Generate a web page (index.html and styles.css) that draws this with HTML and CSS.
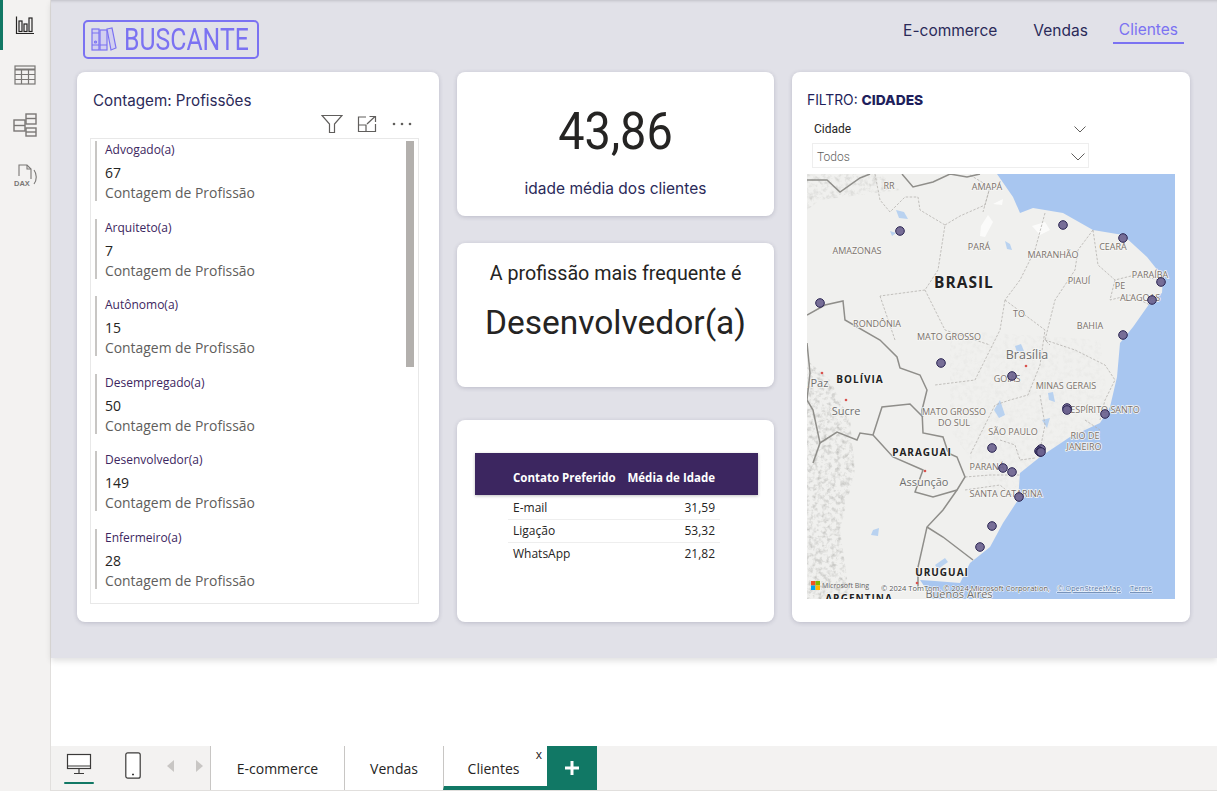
FILE: index.html
```html
<!DOCTYPE html>
<html lang="pt-BR">
<head>
    <meta charset="UTF-8">
    <title>Buscante - Clientes</title>
    <link rel="stylesheet" href="styles.css">
</head>
<body>
<div class="app">
    <!-- Power BI side rail -->
    <aside class="rail">
        <div class="rail-item active">
            <svg width="20" height="20" viewBox="0 0 20 20" fill="none" stroke="#252423" stroke-width="1.2">
                <path d="M1.5 1.5V18.5H19"/>
                <rect x="4" y="6" width="3" height="10.5"/>
                <rect x="9" y="9" width="3" height="7.5"/>
                <rect x="14" y="3" width="3" height="13.5"/>
            </svg>
        </div>
        <div class="rail-item">
            <svg width="22" height="20" viewBox="0 0 22 20" fill="none" stroke="#797775" stroke-width="1.2">
                <rect x="1" y="1" width="20" height="18"/>
                <path d="M1 4.5H21" stroke-width="2"/>
                <path d="M1 9.5H21M1 14.5H21M7.5 4.5V19M14.5 4.5V19"/>
            </svg>
        </div>
        <div class="rail-item">
            <svg width="24" height="24" viewBox="0 0 24 24" fill="none" stroke="#797775" stroke-width="1.4">
                <rect x="1" y="7" width="11" height="11"/>
                <path d="M1 12.500H12"/>
                <rect x="13" y="1" width="10" height="10"/>
                <path d="M13 5.500H23"/>
                <rect x="13" y="15" width="10" height="8"/>
                <path d="M13 19H23"/>
            </svg>
        </div>
        <div class="rail-item">
            <svg width="24" height="24" viewBox="0 0 24 24" fill="none" stroke="#797775" stroke-width="1.1">
                <path d="M6 13V2H14L18 6V16"/>
                <path d="M14 2V6H18"/>
                <path d="M21 7C24 11 24 17 21 21"/>
            </svg>
            <span class="dax">DAX</span>
        </div>
    </aside>

    <div class="main">
        <section class="report">
            <header class="report-top">
                <div class="logo">
                    <svg class="logo-books" width="26" height="25" viewBox="0 0 26 25" fill="none" stroke="#7b72f2" stroke-width="1.2">
                        <rect x="1" y="2" width="7" height="21" fill="#d2cff0"/>
                        <path d="M1 6H8M1 18H8"/>
                        <circle cx="4.500" cy="15" r="1"/>
                        <rect x="9" y="3" width="7" height="20" fill="#d2cff0"/>
                        <path d="M9 18H16"/>
                        <path d="M16 2L21 1L25 21L20 23Z" fill="#d2cff0"/>
                    </svg>
                    <span class="logo-text">BUSCANTE</span>
                </div>
                <nav class="nav">
                    <a>E-commerce</a>
                    <a>Vendas</a>
                    <a class="current">Clientes</a>
                </nav>
            </header>

            <div class="cards">
                <!-- Card list of professions -->
                <div class="card card-list">
                    <h3 class="card-title">Contagem: Profissões</h3>
                    <div class="visual-header">
                        <span class="visual-btn">
                            <svg width="22" height="20" viewBox="0 0 22 20" fill="none" stroke="#605e5c" stroke-width="1.200">
                                <path d="M1 1.500H21L13.500 10V18.500H8.500V10Z"/>
                            </svg>
                        </span>
                        <span class="visual-btn">
                            <svg width="20" height="18" viewBox="0 0 20 18" fill="none" stroke="#605e5c" stroke-width="1.200">
                                <path d="M9 2H1.500V16.500H18.500V9"/>
                                <path d="M1.500 10H9V16.500"/>
                                <path d="M10 9L18 1.500M12.500 1.500H18.500V7"/>
                            </svg>
                        </span>
                        <span class="visual-btn">
                            <svg width="20" height="4" viewBox="0 0 20 4" fill="#605e5c">
                                <circle cx="2" cy="2" r="1.300"/><circle cx="10" cy="2" r="1.300"/><circle cx="18" cy="2" r="1.300"/>
                            </svg>
                        </span>
                    </div>
                    <div class="list-box">
                        <div class="scroll-thumb"></div>
                        <div class="list-item">
                            <div class="item-name">Advogado(a)</div>
                            <div class="item-value">67</div>
                            <div class="item-label">Contagem de Profissão</div>
                        </div>
                        <div class="list-item">
                            <div class="item-name">Arquiteto(a)</div>
                            <div class="item-value">7</div>
                            <div class="item-label">Contagem de Profissão</div>
                        </div>
                        <div class="list-item">
                            <div class="item-name">Autônomo(a)</div>
                            <div class="item-value">15</div>
                            <div class="item-label">Contagem de Profissão</div>
                        </div>
                        <div class="list-item">
                            <div class="item-name">Desempregado(a)</div>
                            <div class="item-value">50</div>
                            <div class="item-label">Contagem de Profissão</div>
                        </div>
                        <div class="list-item">
                            <div class="item-name">Desenvolvedor(a)</div>
                            <div class="item-value">149</div>
                            <div class="item-label">Contagem de Profissão</div>
                        </div>
                        <div class="list-item">
                            <div class="item-name">Enfermeiro(a)</div>
                            <div class="item-value">28</div>
                            <div class="item-label">Contagem de Profissão</div>
                        </div>
                    </div>
                </div>

                <div class="middle">
                    <div class="card card-age">
                        <div class="big-number">43,86</div>
                        <div class="big-caption">idade média dos clientes</div>
                    </div>
                    <div class="card card-job">
                        <div class="job-inner">
                            <div class="job-caption">A profissão mais frequente é</div>
                            <div class="job-name">Desenvolvedor(a)</div>
                        </div>
                    </div>
                    <div class="card card-table">
                        <div class="table-head">
                            <span class="col-a">Contato Preferido</span>
                            <span class="col-b">Média de Idade</span>
                        </div>
                        <div class="table-body">
                            <div class="table-row"><span>E-mail</span><span>31,59</span></div>
                            <div class="table-row"><span>Ligação</span><span>53,32</span></div>
                            <div class="table-row"><span>WhatsApp</span><span>21,82</span></div>
                        </div>
                    </div>
                </div>

                <div class="card card-map">
                    <h3 class="filter-title">FILTRO: <b>CIDADES</b></h3>
                    <div class="slicer">
                        <div class="slicer-head">
                            <span>Cidade</span>
                            <svg width="12" height="7" viewBox="0 0 12 7" fill="none" stroke="#605e5c"><path d="M.5 .5L6 6L11.500 .5"/></svg>
                        </div>
                        <div class="slicer-box">
                            <span>Todos</span>
                            <svg width="14" height="8" viewBox="0 0 14 8" fill="none" stroke="#605e5c"><path d="M.5 .5L7 7L13.500 .5"/></svg>
                        </div>
                    </div>
                    <!-- viewBox uses page coordinates so pins are easy to place -->
                    <svg class="map" width="368" height="425" viewBox="807 174 368 425">
                        <defs>
                            <filter id="relief" x="0" y="0" width="100%" height="100%">
                                <feTurbulence type="fractalNoise" baseFrequency="0.22" numOctaves="3" seed="4"/>
                                <feColorMatrix type="matrix" values="0 0 0 0 0.45  0 0 0 0 0.45  0 0 0 0 0.43  0 0 0 1.600 -0.700"/>
                                <feComposite in2="SourceGraphic" operator="in"/>
                            </filter>
                        </defs>
                        <rect x="807" y="174" width="368" height="425" fill="#f0f0ee"/>
                        <!-- rough relief on the andes and the highlands -->
                        <path filter="url(#relief)" d="M807 360L830 380L850 420L855 470L840 530L850 599H807Z"/>
                        <path filter="url(#relief)" opacity=".6" d="M807 174H880L900 190L860 195L820 200L807 210Z"/>
                        <path filter="url(#relief)" opacity=".15" d="M950 330L1100 340L1110 420L1000 500L950 430Z"/>
                        <!-- sea -->
                        <path fill="#a8c6f0" d="M997 174L1013 197L1020 213L1033 208L1063 213L1093 230L1123 235L1147 257L1163 277L1162 293L1152 300L1133 327L1120 343L1117 377L1110 407L1100 423L1070 437L1040 457L1020 473L1018 500L1003 523L990 547L970 563L960 583L935 581L920 580L933 599H1175V174Z"/>
                        <!-- lakes and rivers -->
                        <g fill="#b9d2f0">
                            <path d="M896 210L904 212L908 219L899 218Z"/>
                            <path d="M890 231L896 233L892 236Z"/>
                            <path d="M1005 241L1010 244L1012 250L1007 249Z"/>
                            <path d="M873 530L879 528L878 536L871 535Z"/>
                            <path d="M1048 393L1053 392L1055 402L1049 400Z"/>
                            <path d="M1000 400L1005 415L999 418L994 410Z"/>
                            <path d="M1042 420L1050 418L1047 428Z"/>
                            <path d="M935 565L945 558L948 562L938 569Z"/>
                            <path d="M1015 346L1021 344L1024 351L1017 352Z"/>
                        </g>
                        <g fill="#fbfbfa">
                            <path d="M981 226L988 215L993 222L985 237L980 236Z"/>
                            <path d="M1032 226L1045 222L1050 230L1040 235Z"/>
                            <path d="M993 204L1003 199L1002 205Z"/>
                        </g>
                        <!-- state lines -->
                        <g fill="none" stroke="#b5b3ae" stroke-width=".8" stroke-dasharray="2.500 1.500">
                            <path d="M875 174L880 200L890 212L905 197H918L920 210L945 225L938 270L925 290L880 296"/>
                            <path d="M945 225L960 216L985 205L990 187L970 175"/>
                            <path d="M990 187L983 212"/>
                            <path d="M1045 213L1035 250L1020 280L1005 300"/>
                            <path d="M1093 230L1078 250L1075 270L1055 300L1045 340L1050 345"/>
                            <path d="M1093 230L1098 265L1115 280L1135 275L1160 280"/>
                            <path d="M1115 280L1110 300L1130 295L1150 305"/>
                            <path d="M1005 300L1000 330L985 360L975 380L935 385"/>
                            <path d="M1005 300L1045 330L1040 365L1028 395L1010 400L995 405"/>
                            <path d="M1045 340L1075 350L1105 365L1115 380L1105 400L1100 420"/>
                            <path d="M995 405L970 455"/>
                            <path d="M1040 395L1045 425L1040 450"/>
                            <path d="M1000 440L1015 445L1020 460L1035 458"/>
                            <path d="M965 477L990 475L1020 475"/>
                            <path d="M965 490L1000 485L1018 500"/>
                            <path d="M1085 420L1100 430"/>
                            <path d="M880 296L895 340"/>
                            <path d="M925 290L945 330L990 345"/>
                        </g>
                        <!-- country lines -->
                        <g fill="none" stroke="#8f8e8a" stroke-width="1.500">
                            <path d="M807 180L827 180L840 192L860 178L870 174"/>
                            <path d="M902 174L913 187L933 182L950 174L967 177L980 174"/>
                            <path d="M807 315L825 305L843 301L845 320L880 340L897 357L900 368L920 375L927 390L922 410L923 433L943 437L948 452"/>
                            <path d="M873 435L882 407L910 404L923 417"/>
                            <path d="M873 435L893 457L923 470L915 492L933 497L957 490L965 477L957 457L948 453"/>
                            <path d="M957 490L943 510L927 527L918 567L918 590"/>
                            <path d="M927 527L943 537L973 560"/>
                            <path d="M807 343L810 373L807 400L813 410L820 443L837 432L857 440L860 433L873 435"/>
                            <path d="M820 443L813 463"/>
                        </g>
                        <!-- city dots -->
                        <g fill="#d9534f">
                            <circle cx="1026" cy="366" r="1.300"/>
                            <circle cx="846" cy="400" r="1.300"/>
                            <circle cx="925" cy="471" r="1.300"/>
                            <circle cx="822" cy="373" r="1.300"/>
                            <circle cx="917" cy="583" r="1.300"/>
                        </g>
                        <!-- labels -->
                        <g class="map-labels">
                            <text x="889" y="189">RR</text>
                            <text x="987" y="190">AMAPÁ</text>
                            <text x="857" y="254">AMAZONAS</text>
                            <text x="979" y="250">PARÁ</text>
                            <text x="1053" y="258">MARANHÃO</text>
                            <text x="1113" y="250">CEARÁ</text>
                            <text x="1079" y="284">PIAUÍ</text>
                            <text x="1150" y="278">PARAÍBA</text>
                            <text x="1120" y="289">PE</text>
                            <text x="1140" y="301">ALAGOAS</text>
                            <text x="1019" y="317">TO</text>
                            <text x="1090" y="329">BAHIA</text>
                            <text x="877" y="327">RONDÔNIA</text>
                            <text x="949" y="340">MATO GROSSO</text>
                            <text x="1007" y="382">GOIÁS</text>
                            <text x="1066" y="389">MINAS GERAIS</text>
                            <text x="954" y="415">MATO GROSSO</text>
                            <text x="954" y="426">DO SUL</text>
                            <text x="1105" y="413">ESPÍRITO SANTO</text>
                            <text x="1013" y="435">SÃO PAULO</text>
                            <text x="1085" y="439">RIO DE</text>
                            <text x="1084" y="450">JANEIRO</text>
                            <text x="987" y="470">PARANÁ</text>
                            <text x="1006" y="497">SANTA CATARINA</text>
                        </g>
                        <g class="map-cities">
                            <text x="1027" y="359">Brasília</text>
                            <text x="812" y="387">La Paz</text>
                            <text x="846" y="415">Sucre</text>
                            <text x="924" y="486">Assunção</text>
                            <text x="959" y="598">Buenos Aires</text>
                        </g>
                        <g class="map-countries">
                            <text x="964" y="288">BRASIL</text>
                            <text x="860" y="383">BOLÍVIA</text>
                            <text x="922" y="456">PARAGUAI</text>
                            <text x="942" y="576">URUGUAI</text>
                            <text x="859" y="602">ARGENTINA</text>
                        </g>
                        <!-- pins -->
                        <g fill="#6c638f" fill-opacity=".92" stroke="#2b2552">
                            <circle cx="900" cy="231" r="4.300"/>
                            <circle cx="1063" cy="225" r="4.300"/>
                            <circle cx="1123" cy="238" r="4.300"/>
                            <circle cx="1161" cy="282" r="4.300"/>
                            <circle cx="1152" cy="300" r="4.300"/>
                            <circle cx="820" cy="303" r="4.300"/>
                            <circle cx="1123" cy="335" r="4.300"/>
                            <circle cx="941" cy="363" r="4.300"/>
                            <circle cx="1012" cy="376" r="4.300"/>
                            <circle cx="1067" cy="408" r="4.300"/>
                            <circle cx="1067" cy="410" r="4.300"/>
                            <circle cx="1105" cy="414" r="4.300"/>
                            <circle cx="1041" cy="449" r="4.300"/>
                            <circle cx="1039" cy="451" r="4.300"/>
                            <circle cx="1040" cy="452" r="4.300"/>
                            <circle cx="1041" cy="452" r="4.300"/>
                            <circle cx="992" cy="448" r="4.300"/>
                            <circle cx="1003" cy="468" r="4.300"/>
                            <circle cx="1012" cy="472" r="4.300"/>
                            <circle cx="1019" cy="497" r="4.300"/>
                            <circle cx="992" cy="526" r="4.300"/>
                            <circle cx="980" cy="547" r="4.300"/>
                        </g>
                        <!-- bing mark and credits -->
                        <rect x="811" y="581" width="4.500" height="4.500" fill="#f25022"/>
                        <rect x="815.500" y="581" width="4.500" height="4.500" fill="#7fba00"/>
                        <rect x="811" y="585.500" width="4.500" height="4.500" fill="#00a4ef"/>
                        <rect x="815.500" y="585.500" width="4.500" height="4.500" fill="#ffb900"/>
                        <text class="map-bing" x="822" y="588">Microsoft Bing</text>
                        <text class="map-credit" x="881" y="591">© 2024 TomTom, © 2024 Microsoft Corporation,</text>
                        <text class="map-credit link" x="1057" y="591">© OpenStreetMap</text>
                        <text class="map-credit link" x="1130" y="591">Terms</text>
                    </svg>
                </div>
            </div>
        </section>

        <div class="blank"></div>

        <!-- page tabs -->
        <footer class="tabbar">
            <div class="view-btn selected">
                <svg width="26" height="22" viewBox="0 0 26 22" fill="none" stroke="#3b3a39" stroke-width="1.200">
                    <rect x="1.500" y="1.500" width="23" height="14" fill="#fff"/>
                    <path d="M1.500 13H24.500M13 15.500V20M8 20.500H18"/>
                </svg>
            </div>
            <div class="view-btn">
                <svg width="16" height="27" viewBox="0 0 16 27" fill="none" stroke="#3b3a39" stroke-width="1.200">
                    <rect x=".8" y=".8" width="14.400" height="25.400" rx="2" fill="#fff"/>
                    <path d="M7 22.500H9" stroke-width="1.500"/>
                </svg>
            </div>
            <div class="pager">
                <svg width="8" height="12" viewBox="0 0 8 12" fill="#c8c6c4"><path d="M7 0V12L0 6Z"/></svg>
                <svg width="8" height="12" viewBox="0 0 8 12" fill="#c8c6c4"><path d="M1 0V12L8 6Z"/></svg>
            </div>
            <div class="tab tab-ecom">E-commerce</div>
            <div class="tab tab-vendas">Vendas</div>
            <div class="tab tab-clientes"><span>Clientes</span><i class="tab-close">x</i></div>
            <div class="tab-add">
                <svg width="14" height="14" viewBox="0 0 14 14" fill="#fff"><path d="M5.500 0H8.500V5.500H14V8.500H8.500V14H5.500V8.500H0V5.500H5.500Z"/></svg>
            </div>
        </footer>
    </div>
</div>
</body>
</html>
```

FILE: styles.css
```css
html, body {
    margin: 0;
    height: 100%;
    background: #fff;
    font-family: "Open Sans", sans-serif;
    overflow: hidden;
}

.app {
    display: flex;
    width: 1217px;
    height: 791px;
}

/* Side rail */
.rail {
    width: 50px;
    flex: none;
    background: #f3f2f1;
    border-right: 1px solid #e1dfdd;
    display: flex;
    flex-direction: column;
}

.rail-item {
    height: 50px;
    display: flex;
    align-items: center;
    justify-content: center;
    position: relative;
}

.rail-item.active {
    box-shadow: inset 3px 0 0 #117865;
}

.dax {
    position: absolute;
    left: 13px;
    top: 29px;
    font: bold 7.500px "Liberation Sans", sans-serif;
    color: #797775;
    background: #f3f2f1;
    padding: 0 1px;
}

.main {
    flex: 1;
    display: flex;
    flex-direction: column;
    min-width: 0;
}

/* Report canvas */
.report {
    height: 658px;
    flex: none;
    background: #e1e1e8;
    box-shadow: 0 3px 6px rgba(0, 0, 0, 0.12), inset 0 3px 3px -2px rgba(0, 0, 0, 0.15);
    box-sizing: border-box;
    padding: 0 27px 0 26px;
}

.report-top {
    height: 72px;
    display: flex;
    justify-content: space-between;
    align-items: flex-start;
}

.logo {
    margin: 20px 0 0 6px;
    width: 176px;
    height: 39px;
    box-sizing: border-box;
    border: 2px solid #7b72f2;
    border-radius: 5px;
    display: flex;
    align-items: center;
    padding-left: 6px;
    gap: 7px;
    overflow: hidden;
}

.logo-books {
    flex: none;
}

.logo-text {
    font: 400 31px/35px Roboto, sans-serif;
    color: #7b72f2;
    transform: scaleX(0.8);
    transform-origin: left center;
    white-space: nowrap;
}

.nav {
    display: flex;
    align-items: center;
    gap: 36px;
    margin: 20px 6px 0 0;
    font: 15.500px Inter, sans-serif;
    color: #2b2a59;
}

.nav a {
    line-height: 20px;
    padding: 0 0 2px;
}

.nav .current {
    color: #7b72f2;
    padding: 0 6px 2px;
    border-bottom: 2px solid #7b72f2;
    margin-left: -11px;
}

.cards {
    display: grid;
    grid-template-columns: 362px 317px 398px;
    column-gap: 18px;
    height: 550px;
}

.card {
    background: #fff;
    border-radius: 8px;
    box-shadow: 0 1px 4px rgba(60, 60, 90, 0.22);
    box-sizing: border-box;
}

/* Profession list */
.card-list {
    padding: 20px 20px 18px 13px;
    display: flex;
    flex-direction: column;
}

.card-title {
    margin: 0 0 0 3px;
    font: 400 15.200px/17px Inter, sans-serif;
    color: #2b2a59;
}

.visual-header {
    display: flex;
    justify-content: flex-end;
    align-items: center;
    height: 25px;
    margin-top: 2px;
    margin-bottom: 2px;
    gap: 9px;
    padding-right: 4px;
}

.visual-btn {
    display: flex;
    align-items: center;
    justify-content: center;
    width: 26px;
}

.list-box {
    height: 466px;
    margin-top: 0;
    box-sizing: border-box;
    border: 1px solid #e8e8e8;
    padding: 2px 0 0 4px;
    overflow: hidden;
    position: relative;
}

.scroll-thumb {
    position: absolute;
    right: 4px;
    top: 2px;
    width: 8px;
    height: 226px;
    background: #b3b0ad;
}

.list-item {
    height: 60px;
    margin-bottom: 17.500px;
    border-left: 2px solid #c8c6c4;
    padding-left: 8px;
    box-sizing: border-box;
}

.item-name {
    font: 12px/16px "Open Sans", sans-serif;
    color: #3c2660;
    padding-top: 1px;
}

.item-value {
    font: 14px/20px "Open Sans", sans-serif;
    color: #252423;
    margin-top: 5px;
}

.item-label {
    font: 13.900px/20px "Open Sans", sans-serif;
    color: #605e5c;
}

/* Middle column */
.middle {
    display: flex;
    flex-direction: column;
}

.card-age {
    height: 144px;
    text-align: center;
    padding-top: 32px;
}

.big-number {
    font: 400 52px/56px Roboto, sans-serif;
    color: #252423;
    transform: scaleX(0.9);
}

.big-caption {
    margin-top: 20px;
    font: 15.500px/18px Inter, sans-serif;
    color: #2b2a59;
}

.card-job {
    height: 144px;
    margin-top: 27px;
    padding: 16px 20px 0;
}

.job-inner {
    text-align: center;
    height: 92px;
}

.job-caption {
    padding-top: 2px;
    font: 19.700px/26px Roboto, sans-serif;
    color: #252423;
}

.job-name {
    margin-top: 16px;
    font: 33.500px/40px Roboto, sans-serif;
    color: #252423;
}

.card-table {
    height: 202px;
    margin-top: 33px;
    padding-top: 33px;
}

.table-head {
    margin-left: 18px;
    width: 283px;
    height: 42px;
    background: #3c2660;
    box-shadow: 0 1px 3px rgba(0, 0, 0, 0.25);
    display: flex;
    align-items: flex-end;
    padding-bottom: 9px;
    box-sizing: border-box;
    color: #fff;
    font: bold 11.500px/16px "Open Sans", sans-serif;
    white-space: nowrap;
}

.col-a {
    margin-left: 38px;
    width: 112px;
}

.col-b {
    width: 90px;
    text-align: right;
}

.table-body {
    margin: 2px 0 0 51px;
    width: 212px;
}

.table-row {
    height: 22px;
    padding: 0 5px;
    border-bottom: 1px solid #eeeeee;
    display: flex;
    justify-content: space-between;
    align-items: center;
    font: 12px/16px "Open Sans", sans-serif;
    color: #252423;
}

.table-row:last-child {
    border-bottom: none;
}

/* Map card */
.card-map {
    padding: 20px 15px 0;
}

.filter-title {
    margin: 0;
    font: 400 13.800px/17px Inter, sans-serif;
    color: #1f1f5c;
}

.filter-title b {
    font-weight: 800;
}

.slicer {
    width: 282px;
    margin-top: 5px;
    height: 52px;
    padding-top: 4px;
    box-sizing: border-box;
}

.slicer-head {
    display: flex;
    justify-content: space-between;
    align-items: center;
    height: 22px;
    padding: 0 3px 0 7px;
    font: 12px/16px Roboto, sans-serif;
    color: #252423;
}

.slicer-box {
    display: flex;
    justify-content: space-between;
    align-items: center;
    width: 277px;
    height: 25px;
    margin: 3px 0 0 5px;
    box-sizing: border-box;
    border: 1px solid #eeeeee;
    padding: 2px 3px 0 4px;
    font: 300 12px/16px Roboto, sans-serif;
    color: #605e5c;
}

.map {
    display: block;
    margin-top: 8px;
}

.map-labels text {
    font: 500 9px "Open Sans", sans-serif;
    fill: #7a716b;
    text-anchor: middle;
    paint-order: stroke;
    stroke: #f6f6f4;
    stroke-width: 1.500px;
}

.map-cities text {
    font: 500 11px "Open Sans", sans-serif;
    fill: #6e6e6e;
    text-anchor: middle;
    paint-order: stroke;
    stroke: #f6f6f4;
    stroke-width: 1.500px;
}

.map-cities text:first-child {
    font-size: 12.500px;
}

.map-countries text {
    font: bold 10px "Open Sans", sans-serif;
    letter-spacing: 1px;
    fill: #222222;
    text-anchor: middle;
    paint-order: stroke;
    stroke: #f6f6f4;
    stroke-width: 1.500px;
}

.map-countries text:first-child {
    font-size: 15.500px;
}

.map-bing {
    font: 7px "Open Sans", sans-serif;
    fill: #666666;
}

.map-credit {
    font: 7.500px "Open Sans", sans-serif;
    fill: #555555;
    paint-order: stroke;
    stroke: #ffffff;
    stroke-width: 1px;
}

.map-credit.link {
    text-decoration: underline;
    fill: #4a6fa5;
}

/* Bottom bar */
.blank {
    flex: 1;
}

.tabbar {
    height: 45px;
    flex: none;
    background: #f3f2f1;
    border-bottom: 1px solid #e1dfdd;
    box-sizing: border-box;
    display: flex;
    align-items: stretch;
    font: 14px/20px "Open Sans", sans-serif;
    color: #252423;
}

.view-btn {
    width: 30px;
    margin-left: 13px;
    display: flex;
    align-items: center;
    justify-content: center;
    padding-bottom: 8px;
    box-sizing: border-box;
    position: relative;
}

.view-btn + .view-btn {
    margin-left: 22px;
    width: 34px;
    padding-bottom: 6px;
}

.view-btn.selected::after {
    content: "";
    position: absolute;
    left: 0;
    right: 0;
    bottom: 6px;
    height: 2px;
    background: #117865;
    border-radius: 1px;
}

.pager {
    width: 36px;
    margin-left: 17px;
    display: flex;
    align-items: center;
    justify-content: space-between;
    padding-bottom: 4px;
}

.tab {
    background: #fff;
    border-left: 1px solid #c8c6c4;
    display: flex;
    align-items: center;
    justify-content: center;
    box-sizing: border-box;
    position: relative;
    padding-top: 2px;
}

.pager + .tab {
    margin-left: 7px;
}

.tab-ecom {
    width: 134px;
}

.tab-vendas {
    width: 99px;
}

.tab-clientes {
    width: 104px;
    border-bottom: 4px solid #117865;
    padding-top: 6px;
    padding-right: 4px;
}

.tab-close {
    position: absolute;
    right: 5px;
    top: 1px;
    font: 12px/16px "Open Sans", sans-serif;
}

.tab-add {
    width: 50px;
    background: #117865;
    display: flex;
    align-items: center;
    justify-content: center;
}
```
